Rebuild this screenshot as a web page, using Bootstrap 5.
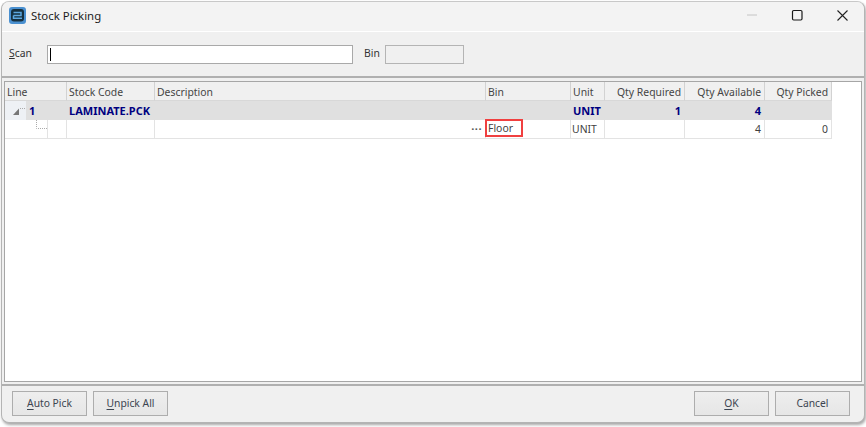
<!DOCTYPE html>
<html><head><meta charset="utf-8"><title>Stock Picking</title>
<link href="https://cdn.jsdelivr.net/npm/bootstrap@5.3.0/dist/css/bootstrap.min.css" rel="stylesheet">
<style>
html,body{height:427px;overflow:hidden;background:#fff;margin:0}
body{font-family:"Noto Sans","Open Sans",sans-serif;font-size:10.4px;color:#3b3b3b;line-height:1}
.win{width:864px;height:422px;margin-left:1px;margin-top:1px;background:#f0f0f0;border:1px solid #b4b4b4;border-top-color:#c8c8c8;border-radius:8px;overflow:hidden;box-shadow:1px 2px 3px rgba(0,0,0,.35)}
.tbar{height:30px;background:#f3f3f3;border-bottom:1px solid #fff;padding-left:7px;padding-bottom:2px}
.ttl{font-size:11.4px;color:#1c1c1c;margin-left:5px}
.wbtns{width:135px;height:29px;color:#222}
.tools{height:46px;padding-left:7px;border-bottom:2px solid #b0b0b0}
.lbl-scan{width:38px;color:#333;padding-bottom:2px}
.scan{width:306px;height:19px;background:#fff;border:1px solid #a9a9a9}
.scan::before{content:"";display:block;width:1px;height:13px;background:#000;margin:2px 0 0 2px}
.binlbl{margin-left:11px;width:21px;color:#333;padding-bottom:2px}
.binbox{width:79px;height:19px;background:#f0f0f0;border:1px solid #b4b4b4}
.gridbox{height:301px;margin:3px 2px 0 2px;border:1px solid #a6a6a6;background:#fff}
.pgrid{table-layout:fixed;width:827px;border-collapse:separate;border-spacing:0;margin:0}
.pgrid th,.pgrid td{box-sizing:border-box;padding:0 3px 0 2px;font-weight:400;height:19px;border-right:1px solid #e3e3e3;border-bottom:1px solid #e3e3e3;white-space:nowrap;overflow:visible;vertical-align:middle;background:#fff;color:#3f3f3f}
.pgrid th{background:#f0f0f0;border-right-color:#d2d2d2;border-bottom-color:#d8d8d8;color:#444;padding-top:2px}
.c1{width:21px}.c2{width:22px}.c3{width:19px}.c4{width:88px}.c5{width:331px}.c6{width:85px}.c7{width:34px}.c8{width:80px}.c9{width:80px}.c10{width:67px}
.pgrid tr.grp td{background:#e0e0e0;color:#000080;font-weight:700;font-size:11px;border-right-color:#e0e0e0;border-bottom-color:#e0e0e0}
.pgrid tr.grp td.ind{background:#eef1f5;padding:0;border-right-color:#eef1f5;border-bottom-color:#eef1f5}
.pgrid tr.grp td.linenum{padding-left:3px}
.pgrid td.flat{padding:0}
.pgrid td.desc{padding:0}
.pgrid td.unitcell{padding-left:1px}
.dots{color:#555;letter-spacing:.5px;font-weight:700;font-size:11px;padding-right:3px;line-height:1}
.pgrid td.bincell{padding:0;vertical-align:top}
.floor{display:block;width:38px;height:18px;border:2px solid #f04040;margin:-1px 0 0 -1px;padding:2px 0 0 1px;color:#3f3f3f}
.foot{height:37px;padding:0 14px 0 10px;border-top:2px solid #b0b0b0;margin-top:2px}
.fbtn{width:75px;height:25px;background:linear-gradient(#eee,#e6e6e6);border:1px solid #adadad;border-radius:0;color:#3c4450;font-size:10.3px;padding:0;line-height:1}
.gap6{gap:6px}
.fbtn u{text-underline-offset:2px}
</style></head>
<body>
<div class="win d-flex flex-column">
  <div class="tbar d-flex align-items-center">
    <svg width="17" height="17" viewBox="0 0 17 17"><rect width="17" height="17" rx="3" fill="#4a90d0"/><rect x="2" y="2" width="13" height="12.500" rx="3" fill="#16303f"/><path d="M4.500 5.500h7.500v3H4.500M4.500 8.500v2.700h8.500" fill="none" stroke="#5ea8e0" stroke-width="1.500"/></svg>
    <span class="ttl">Stock Picking</span>
    <div class="wbtns ms-auto align-self-start">
      <svg class="d-block" width="135" height="29" viewBox="0 0 135 29"><path d="M18 13h10" stroke="#c4c4c4" fill="none"/><rect x="63.500" y="8.500" width="9.500" height="9.500" rx="1.200" fill="none" stroke="#1a1a1a" stroke-width="1.200"/><path d="M108.500 8.500l10 10M118.500 8.500l-10 10" stroke="#222" stroke-width="1.100" fill="none"/></svg>
    </div>
  </div>
  <div class="tools d-flex align-items-center">
    <span class="lbl-scan"><u>S</u>can</span>
    <div class="scan"></div>
    <span class="binlbl">Bin</span>
    <div class="binbox"></div>
  </div>
  <div class="gridbox">
    <table class="pgrid"><colgroup><col class="c1"><col class="c2"><col class="c3"><col class="c4"><col class="c5"><col class="c6"><col class="c7"><col class="c8"><col class="c9"><col class="c10"></colgroup>
      <thead><tr><th colspan="3">Line</th><th>Stock Code</th><th>Description</th><th>Bin</th><th>Unit</th><th class="text-end">Qty Required</th><th class="text-end">Qty Available</th><th class="text-end">Qty Picked</th></tr></thead>
      <tbody>
        <tr class="grp"><td class="ind"><svg class="d-block" width="21" height="18" viewBox="0 0 21 18"><path d="M8 14l6-6.500v6.500z" fill="#777"/><path d="M15 7.500h6" stroke="#aaa" stroke-dasharray="1 1" fill="none"/></svg></td><td class="linenum" colspan="2">1</td><td>LAMINATE.PCK</td><td></td><td></td><td>UNIT</td><td class="text-end">1</td><td class="text-end">4</td><td></td></tr>
        <tr><td class="flat" colspan="2"><svg class="d-block" width="42" height="18" viewBox="0 0 42 18"><path d="M31.500 0v8.500H42" stroke="#aaa" stroke-dasharray="1 1" fill="none"/></svg></td><td></td><td></td><td class="desc text-end"><span class="dots">···</span></td><td class="bincell"><span class="floor">Floor</span></td><td class="unitcell">UNIT</td><td></td><td class="text-end">4</td><td class="text-end">0</td></tr>
      </tbody>
    </table>
  </div>
  <div class="foot d-flex align-items-center gap6">
    <button class="btn fbtn" type="button"><u>A</u>uto Pick</button>
    <button class="btn fbtn" type="button"><u>U</u>npick All</button>
    <button class="btn fbtn ms-auto" type="button"><u>O</u>K</button>
    <button class="btn fbtn" type="button">Cancel</button>
  </div>
</div>
</body></html>
